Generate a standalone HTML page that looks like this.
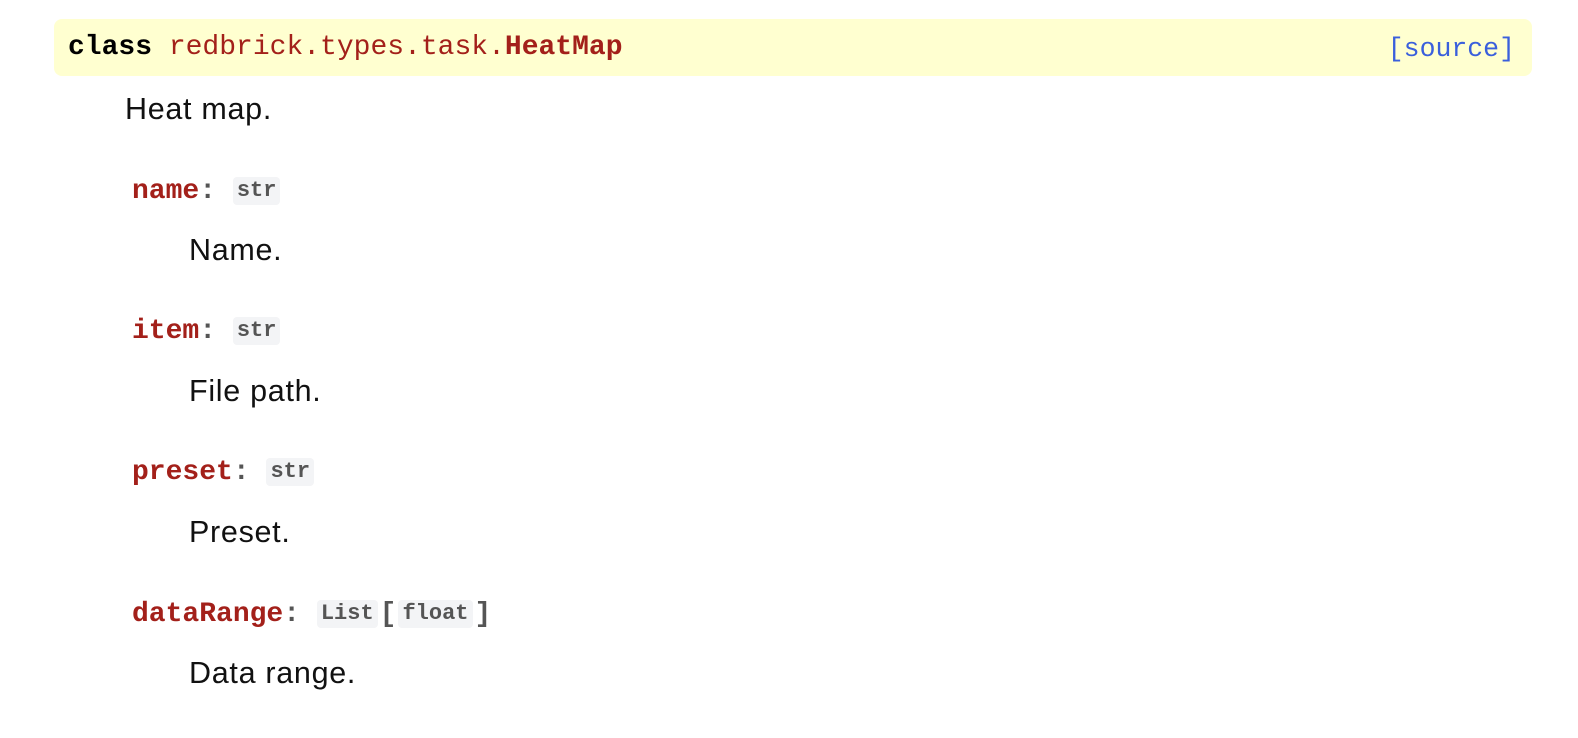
<!DOCTYPE html>
<html><head><style>
body{margin:0;background:#fff;width:1578px;height:738px;overflow:hidden;font-family:"Liberation Sans",sans-serif;}
.mono{font-family:"Liberation Mono",monospace;}
.hd{position:absolute;left:54px;top:19px;width:1478px;height:57px;background:#ffffd0;border-radius:8px;}
.hd .t{position:absolute;left:14px;top:13px;font-size:28px;line-height:32px;white-space:pre;}
.src{position:absolute;right:17px;top:14px;font-size:26.5px;line-height:32px;color:#3a5fdc;}
.txt{position:absolute;font-size:30.5px;letter-spacing:0.7px;color:#111;line-height:34px;}
.nm{position:absolute;left:132px;font-size:28px;line-height:34px;white-space:pre;}
.nm b{color:#a3201a;}
.nm .c{color:#555;font-weight:bold;}
.code{display:inline-block;background:#f3f4f6;color:#555;font-weight:bold;font-size:22px;line-height:28px;padding:0 4px;border-radius:4px;vertical-align:2px;}
.br{margin:0 2px;}
</style></head><body>
<div class="hd"><span class="t mono"><b>class</b> <span style="color:#a3201a">redbrick.types.task.<b>HeatMap</b></span></span><span class="src mono">[source]</span></div>
<div class="txt" style="left:125px;top:92px">Heat map.</div>
<div class="nm mono" style="top:175px"><b>name</b><span class="c">:</span> <span class="code">str</span></div>
<div class="txt" style="left:189px;top:233px">Name.</div>
<div class="nm mono" style="top:315px"><b>item</b><span class="c">:</span> <span class="code">str</span></div>
<div class="txt" style="left:189px;top:374px">File path.</div>
<div class="nm mono" style="top:456px"><b>preset</b><span class="c">:</span> <span class="code">str</span></div>
<div class="txt" style="left:189px;top:515px">Preset.</div>
<div class="nm mono" style="top:598px"><b>dataRange</b><span class="c">:</span> <span class="code">List</span><span class="c br">[</span><span class="code">float</span><span class="c br">]</span></div>
<div class="txt" style="left:189px;top:656px">Data range.</div>
</body></html>
